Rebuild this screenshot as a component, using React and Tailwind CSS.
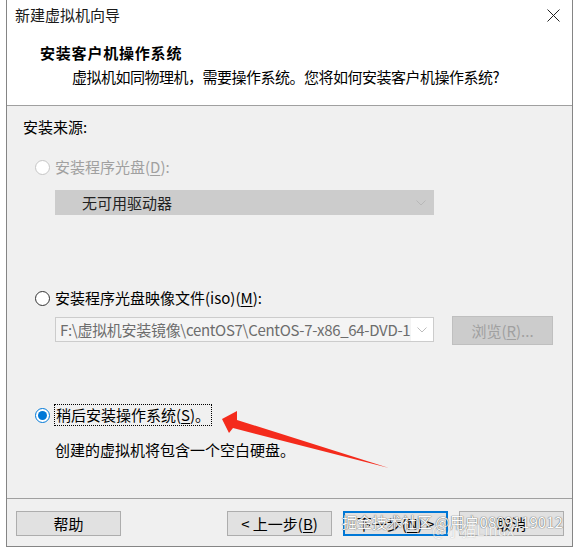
import React from 'react';

const font = "font-['Noto_Sans_CJK_SC','Noto_Sans',sans-serif]";

function Radio({ state }) {
  if (state === 'checked') {
    return (
      <span className="flex h-[15px] w-[15px] items-center justify-center rounded-full border-[1.5px] border-[#0078d7] bg-white">
        <span className="h-[9px] w-[9px] rounded-full bg-[#0078d7]" />
      </span>
    );
  }
  if (state === 'disabled') {
    return <span className="block h-[15px] w-[15px] rounded-full border border-[#c6c6c6] bg-white" />;
  }
  return <span className="block h-[15px] w-[15px] rounded-full border-[1.5px] border-[#333] bg-white" />;
}

function Chevron({ color = '#bdbdbd' }) {
  return (
    <svg width="10" height="6" viewBox="0 0 10 6" fill="none">
      <path d="M0.5 0.5 L5 5 L9.5 0.5" stroke={color} strokeWidth="1" />
    </svg>
  );
}

function Button({ children, primary }) {
  return (
    <div
      className={`flex h-[25px] w-[105px] items-center justify-center bg-[#e1e1e1] text-[15px] leading-[20px] text-black ${
        primary ? 'border-2 border-[#0078d7]' : 'border border-[#adadad]'
      }`}
    >
      {children}
    </div>
  );
}

export default function App() {
  return (
    <div className={`relative h-[551px] w-[581px] overflow-hidden bg-white ${font}`}>
      <div className="ml-[6px] flex h-[547px] w-[567px] flex-col border-x border-b border-[#858585]">
        {/* title bar */}
        <div className="flex h-[30px] items-center justify-between bg-white pl-[8px] pr-[12px]">
          <span className="text-[15px] leading-[20px] text-[#1a1a1a]">新建虚拟机向导</span>
          <svg width="13" height="13" viewBox="0 0 13 13">
            <path d="M0.5 0.5 L12.5 12.5 M12.5 0.5 L0.5 12.5" stroke="#222" strokeWidth="1" />
          </svg>
        </div>

        {/* header */}
        <div className="h-[76px] border-b border-[#a0a0a0] bg-white pt-[13px]">
          <div className="pl-[33px] text-[15px] font-bold leading-[20px] tracking-[0.8px] text-black">安装客户机操作系统</div>
          <div className="mt-[4px] pl-[65px] text-[15px] leading-[20px] tracking-[-0.5px] text-black">
            虚拟机如同物理机，需要操作系统。您将如何安装客户机操作系统?
          </div>
        </div>

        {/* body */}
        <div className="flex h-[392px] flex-col bg-[#f0f0f0] pl-[16px] pt-[11px] text-[15px] leading-[20px] text-black">
          <div>安装来源:</div>

          <div className="mt-[20px] flex items-center gap-[5px] pl-[12px] text-[#a0a0a0]">
            <Radio state="disabled" />
            <span>
              安装程序光盘(<span className="underline underline-offset-2">D</span>):
            </span>
          </div>

          <div className="ml-[32px] mt-[13px] flex h-[25px] w-[379px] items-center justify-between border border-[#cccccc] bg-[#cccccc] pl-[26px] pr-[7px]">
            <span className="text-[#222]">无可用驱动器</span>
            <Chevron color="#b8b8b8" />
          </div>

          <div className="mt-[73px] flex items-center gap-[5px] pl-[12px]">
            <Radio state="off" />
            <span>
              安装程序光盘映像文件(iso)(<span className="underline underline-offset-2">M</span>):
            </span>
          </div>

          <div className="ml-[32px] mt-[8px] flex items-start gap-[18px]">
            <div className="mt-[1px] flex h-[25px] w-[379px] items-center border border-[#cccccc] bg-white">
              <div className="flex h-full w-[355px] items-center overflow-hidden whitespace-nowrap bg-[#f4f4f4] pl-[4px] tracking-[-0.3px] text-[#6d6d6d]">
                F:\虚拟机安装镜像\centOS7\CentOS-7-x86_64-DVD-1
              </div>
              <div className="flex flex-1 justify-center">
                <Chevron />
              </div>
            </div>
            <div className="flex h-[29px] w-[101px] items-center justify-center border border-[#bfbfbf] bg-[#cccccc] text-[#a0a0a0]">
              浏览(<span className="underline underline-offset-2">R</span>)...
            </div>
          </div>

          <div className="mt-[59px] flex items-center gap-[4px] pl-[12px]">
            <Radio state="checked" />
            <span className="border border-dotted border-black px-[1px]">
              稍后安装操作系统(<span className="underline underline-offset-2">S</span>)。
            </span>
          </div>

          <div className="mt-[14px] pl-[32px]">创建的虚拟机将包含一个空白硬盘。</div>
        </div>

        {/* footer */}
        <div className="flex h-[48px] items-start justify-between border-t border-[#a0a0a0] bg-[#f0f0f0] pl-[9px] pr-[8px] pt-[12px]">
          <Button>帮助</Button>
          <div className="flex gap-[11px]">
            <Button>
              &lt; 上一步(<span className="underline underline-offset-2">B</span>)
            </Button>
            <Button primary>
              下一步(<span className="underline underline-offset-2">N</span>) &gt;
            </Button>
            <Button>取消</Button>
          </div>
        </div>
      </div>

      {/* red annotation arrow */}
      <svg className="pointer-events-none absolute left-0 top-0" width="581" height="551">
        <polygon
          points="222,419 237,411 237,420 389,468 233,428 229,433"
          fill="#f42b1c"
        />
      </svg>

      {/* watermark */}
      <div className="pointer-events-none absolute left-[342px] top-[512px] whitespace-nowrap text-[15px] leading-[20px] text-white opacity-90 [text-shadow:0_0_1px_#555,0_0_1px_#555]">
        掘金技术社区 @用户0809119012
      </div>
      <div className="pointer-events-none absolute left-[432px] top-[520px] whitespace-nowrap text-[15px] leading-[20px] text-white opacity-60 [text-shadow:0_0_1px_#777]">
        @小猫Linux
      </div>
    </div>
  );
}
